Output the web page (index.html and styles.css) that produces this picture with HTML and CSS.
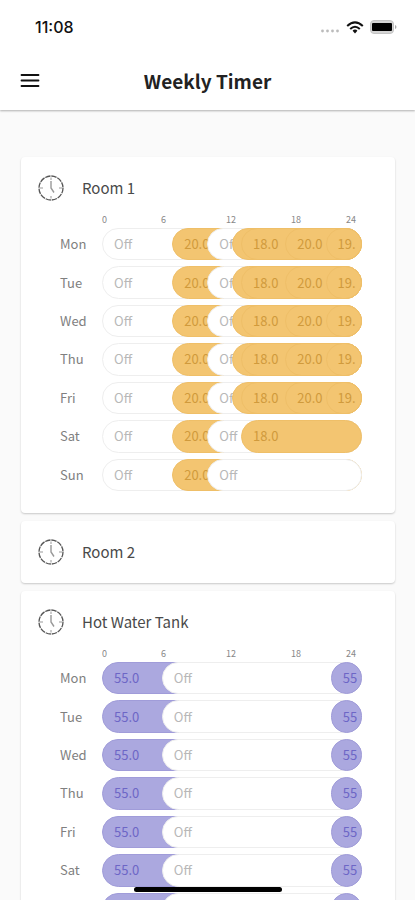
FILE: index.html
```html
<!DOCTYPE html>
<html lang="en">
<head>
<meta charset="utf-8">
<meta name="viewport" content="width=device-width, initial-scale=1">
<title>Weekly Timer</title>
<link rel="stylesheet" href="styles.css">
</head>
<body>
<svg class="sprite" aria-hidden="true">
  <symbol id="clock" viewBox="0 0 26 26">
    <circle cx="13" cy="13" r="12" fill="none" stroke="#555" stroke-width="1.3" stroke-dasharray="5.4 0.88"/>
    <path d="M13 2.500v2.500M13 21v2.500M2 13h3M21 13h3" fill="none" stroke="#999" stroke-width="1"/>
    <path d="M13 6v7l3 4.500" fill="none" stroke="#999" stroke-width="1.4"/>
  </symbol>
</svg>
<div class="app">
  <header class="top">
    <div class="status">
      <span class="time">11:08</span>
      <span class="signals">
        <svg class="dots" viewBox="0 0 20 4" aria-hidden="true"><g fill="#bbb"><circle cx="2.500" cy="2" r="1.400"/><circle cx="7.500" cy="2" r="1.400"/><circle cx="12.500" cy="2" r="1.400"/><circle cx="17.500" cy="2" r="1.400"/></g></svg>
        <svg class="wifi" viewBox="0 0 18 13" aria-hidden="true"><g fill="none" stroke="#111" stroke-width="2"><path d="M1.200 5Q9-2.200 16.800 5"/><path d="M4.200 8Q9 3.600 13.800 8"/></g><path d="M9 8.600q1.500 0 2.400 1.200L9 12.600l-2.400-2.800Q7.500 8.600 9 8.600z" fill="#111"/></svg>
        <svg class="battery" viewBox="0 0 27 14" aria-hidden="true"><rect x=".5" y=".5" width="23" height="13" rx="3.500" fill="#d4d4d4" stroke="#c4c4c4"/><rect x="2" y="3" width="20" height="8" rx="1" fill="#000"/><path d="M25 5q1.500.5 1.500 2T25 9z" fill="#aaa"/></svg>
      </span>
    </div>
    <div class="bar">
      <button class="menu" type="button" aria-label="Menu"><svg viewBox="0 0 20 14" aria-hidden="true"><path d="M1.500 1h17M1.500 6.500h17M1.500 12h17" stroke="#111" stroke-width="1.800" stroke-linecap="round"/></svg></button>
      <h1>Weekly Timer</h1>
    </div>
  </header>
  <main class="cards">
    <section class="card">
      <header class="card-head"><svg class="clock" aria-hidden="true"><use href="#clock"/></svg><h2>Room 1</h2></header>
      <div class="chart room" data-schedule="room"></div>
    </section>
    <section class="card">
      <header class="card-head closed"><svg class="clock" aria-hidden="true"><use href="#clock"/></svg><h2>Room 2</h2></header>
    </section>
    <section class="card">
      <header class="card-head"><svg class="clock" aria-hidden="true"><use href="#clock"/></svg><h2>Hot Water Tank</h2></header>
      <div class="chart tank" data-schedule="tank"></div>
    </section>
  </main>
  <div class="home"></div>
</div>
<script src="script.js"></script>
</body>
</html>
```
FILE: styles.css
```css
* { box-sizing: border-box; }
body {
  margin: 0;
  font-family: "Noto Sans CJK SC", "Noto Sans", sans-serif;
  background: #fafafa;
  color: #333;
}
h1, h2 { margin: 0; }
.sprite { position: absolute; width: 0; height: 0; }
.app { height: 100vh; display: flex; flex-direction: column; overflow: hidden; }
.top {
  flex: none;
  background: #fff;
  box-shadow: 0 1px 2px rgba(0, 0, 0, .3);
  z-index: 1;
}
.status {
  height: 54px;
  padding: 0 18px 0 35px;
  display: flex;
  align-items: center;
  justify-content: space-between;
}
.time { font: 500 16px/20px Inter, sans-serif; color: #111; }
.signals { display: flex; align-items: center; gap: 6px; }
.dots { width: 20px; height: 4px; margin-top: 8px; }
.wifi { width: 18px; height: 13px; }
.battery { width: 27px; height: 14px; }
.bar {
  height: 56px;
  padding: 0 20px 2px;
  display: grid;
  grid-template-columns: 20px 1fr 20px;
  align-items: center;
}
.menu { width: 20px; height: 14px; padding: 0; border: 0; background: none; }
.menu svg { display: block; width: 20px; height: 14px; }
h1 { font-size: 19px; line-height: 28px; font-weight: 700; color: #222; text-align: center; }
.cards {
  flex: 1;
  min-height: 0;
  overflow: hidden;
  padding: 47px 20px 0 21px;
}
.card {
  margin-bottom: 8px;
  background: #fff;
  border-radius: 4px;
  box-shadow: 0 1px 2px rgba(0, 0, 0, .2);
}
.card-head { display: flex; align-items: center; gap: 18px; padding: 16px 17px 9px; }
.card-head.closed { padding-bottom: 16px; }
.clock { width: 26px; height: 26px; }
h2 { font-size: 15px; line-height: 30px; font-weight: 400; color: #4a4a4a; }
.chart { padding: 0 33px 22px 39px; }
.axis {
  margin-left: 42px;
  display: grid;
  grid-template-columns: 59fr 65fr 65fr 55fr 16fr;
  font-size: 9px;
  line-height: 16px;
  color: #888;
}
.days {
  margin: 0;
  padding: 0;
  list-style: none;
  min-height: 263px;
  display: grid;
  grid-auto-rows: 1fr;
  gap: 6px;
}
.day { display: grid; grid-template-columns: 42px 1fr; align-items: center; font-size: 13px; line-height: 20px; color: #808080; }
.track {
  height: 100%;
  min-height: 32px;
  display: grid;
}
.slot {
  grid-area: 1 / 1;
  min-width: 0;
  padding: 0 2px 0 11px;
  display: flex;
  align-items: center;
  border: 1px solid #eee;
  border-radius: 17px;
  background: #fff;
  color: #b8b8b8;
}
.slot span { white-space: nowrap; }
.room .on { background: #f3c571; border-color: #efbf68; color: #d09a3c; }
.tank .on { background: #aba8df; border-color: #a09cd9; color: #6d66c6; }
.home {
  position: fixed;
  bottom: 8px;
  left: 50%;
  width: 148px;
  height: 5px;
  margin-left: -74px;
  border-radius: 3px;
  background: #000;
  z-index: 2;
}
```
FILE: script.js
```js
// Each slot is [start as a percentage of the day, label]; later slots lie over earlier ones.
const week = ["Mon", "Tue", "Wed", "Thu", "Fri", "Sat", "Sun"];
const morning = [[0, "Off"], [27, "20.0"], [40.5, "Off"]];
const workday = [...morning, [50, ""], [53.5, "18.0"], [70.5, "20.0"], [86, "19."]];
const tankDay = [[0, "55.0"], [23, "Off"], [88, "55"]];
const schedules = {
  room: [workday, workday, workday, workday, workday, [...morning, [53.5, "18.0"]], morning],
  tank: week.map(() => tankDay)
};

document.querySelectorAll("[data-schedule]").forEach(chart => {
  const days = schedules[chart.dataset.schedule];
  const rows = days.map((slots, i) => {
    const pills = slots.map(([start, label]) =>
      `<div class="slot${label === "Off" ? "" : " on"}" style="margin-left:${start}%"><span>${label}</span></div>`
    ).join("");
    return `<li class="day"><span>${week[i]}</span><div class="track">${pills}</div></li>`;
  }).join("");
  chart.innerHTML =
    `<div class="axis"><span>0</span><span>6</span><span>12</span><span>18</span><span>24</span></div><ul class="days">${rows}</ul>`;
});
```
